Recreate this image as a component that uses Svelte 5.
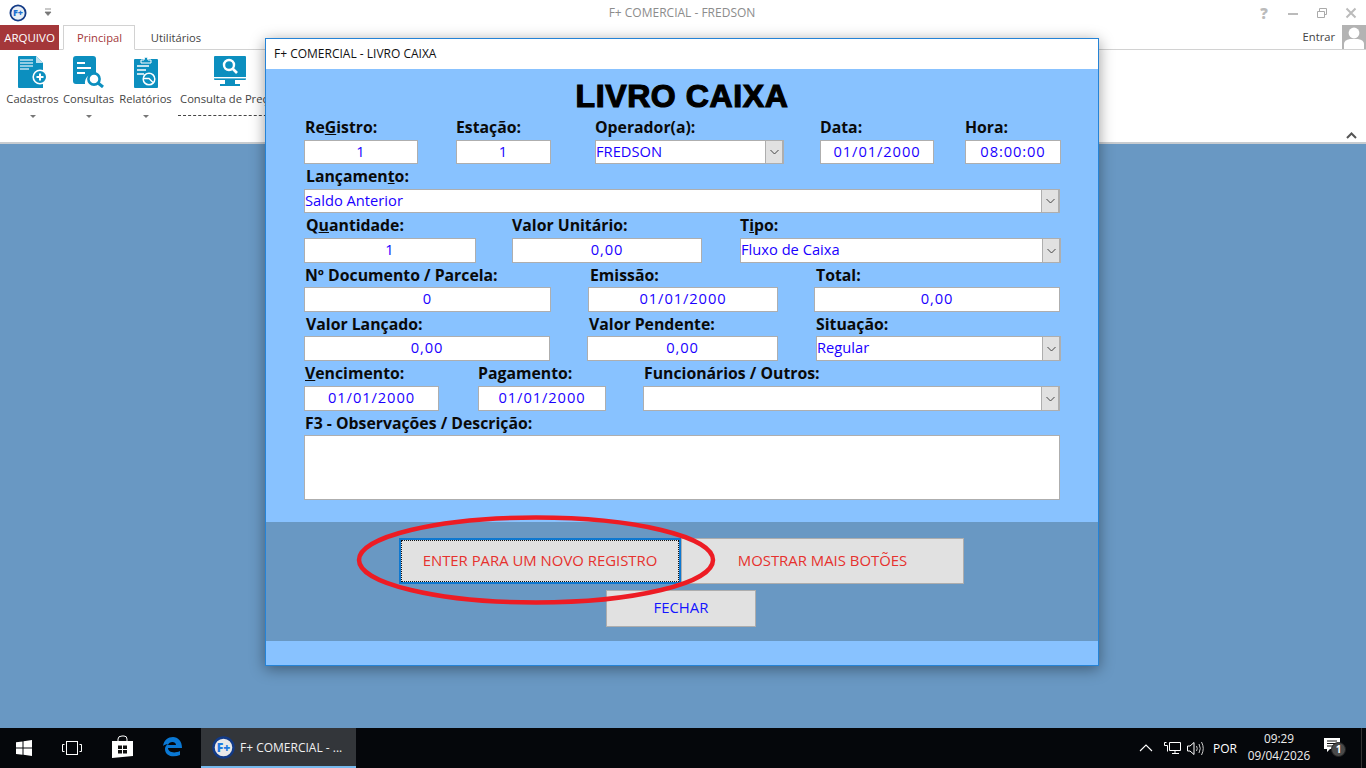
<script>
  // x / w are page coordinates of the field, lx the label's own start
  // lh is the space the label takes above its field
  const rows = [
    { h: 24, lh: 25, fields: [
      { label: ['Re', 'G', 'istro:'], lx: 305, x: 304, w: 114, value: '1' },
      { label: ['Estação:'], lx: 456, x: 456, w: 95, value: '1' },
      { label: ['Operador(a):'], lx: 595, x: 595, w: 189, value: 'FREDSON', combo: true },
      { label: ['Data:'], lx: 820, x: 820, w: 114, value: '01/01/2000' },
      { label: ['Hora:'], lx: 965, x: 965, w: 96, value: '08:00:00' }
    ] },
    { h: 24, lh: 25, fields: [
      { label: ['Lançamen', 't', 'o:'], lx: 306, x: 304, w: 756, value: 'Saldo Anterior', combo: true }
    ] },
    { h: 25, lh: 25, fields: [
      { label: ['Q', 'u', 'antidade:'], lx: 306, x: 304, w: 172, value: '1' },
      { label: ['Valor Unitário:'], lx: 512, x: 512, w: 190, value: '0,00' },
      { label: ['T', 'i', 'po:'], lx: 740, x: 740, w: 321, value: 'Fluxo de Caixa', combo: true }
    ] },
    { h: 25, lh: 24, fields: [
      { label: ['Nº Documento / Parcela:'], lx: 305, x: 304, w: 247, value: '0' },
      { label: ['Emissão:'], lx: 590, x: 588, w: 190, value: '01/01/2000' },
      { label: ['Total:'], lx: 816, x: 814, w: 246, value: '0,00' }
    ] },
    { h: 25, lh: 24, fields: [
      { label: ['Valor Lançado:'], lx: 306, x: 304, w: 246, value: '0,00' },
      { label: ['Valor Pendente:'], lx: 589, x: 587, w: 191, value: '0,00' },
      { label: ['Situação:'], lx: 816, x: 816, w: 245, value: 'Regular', combo: true }
    ] },
    { h: 25, lh: 25, fields: [
      { label: ['', 'V', 'encimento:'], lx: 305, x: 304, w: 135, value: '01/01/2000' },
      { label: ['Pagamento:'], lx: 478, x: 478, w: 128, value: '01/01/2000' },
      { label: ['Funcionários / Outros:'], lx: 644, x: 643, w: 417, value: '', combo: true }
    ] },
    { h: 65, lh: 24, fields: [
      { label: ['F3 - Observações / Descrição:'], lx: 305, x: 304, w: 756, value: '' }
    ] }
  ];

  const ml = (row, i) => {
    const prev = i === 0 ? 266 : row.fields[i - 1].x + row.fields[i - 1].w;
    return row.fields[i].x - prev;
  };
</script>

<div class="screen">
  <header class="titlebar">
    <svg class="logo" width="18" height="18" viewBox="0 0 18 18">
      <circle cx="9" cy="9" r="7.6" fill="#e8eef5" stroke="#123a86" stroke-width="1.8" />
      <text x="9" y="12.4" text-anchor="middle" class="logotext">F+</text>
    </svg>
    <svg class="qat" width="9" height="9" viewBox="0 0 9 9">
      <path d="M1 1h6M1 4h6L4 7.5z" fill="#777" stroke="#777" stroke-width="0.8" />
    </svg>
    <span class="apptitle">F+ COMERCIAL - FREDSON</span>
    <div class="winctl">
      <span class="help">?</span>
      <svg width="12" height="12" viewBox="0 0 12 12"><path d="M1 7h10" stroke="#bbb" stroke-width="2" /></svg>
      <svg width="12" height="12" viewBox="0 0 12 12"><path d="M1.500 4.500h7v6h-7zM3.500 4.500v-3h7v6h-2" fill="none" stroke="#aaa" /></svg>
      <svg width="12" height="12" viewBox="0 0 12 12"><path d="M1.500 1.500l9 9M10.500 1.500l-9 9" stroke="#bbb" stroke-width="2" /></svg>
    </div>
  </header>

  <nav class="tabs">
    <span class="arquivo">ARQUIVO</span>
    <span class="tab active">Principal</span>
    <span class="tab">Utilitários</span>
    <span class="entrar">Entrar</span>
    <span class="avatar">
      <svg width="24" height="24" viewBox="0 0 24 24">
        <circle cx="12" cy="8" r="5.400" fill="#fff" />
        <path d="M2 24v-5q0-4 6-5h8q6 1 6 5v5z" fill="#fff" />
      </svg>
    </span>
  </nav>

  <section class="ribbon">
    <div class="rbtn cadastros">
      <svg width="30" height="32" viewBox="0 0 30 32">
        <path d="M0 1a1 1 0 0 1 1-1h17l7 7v25H1a1 1 0 0 1-1-1z" fill="#0c8fbf" />
        <path d="M18 0l7 7h-7z" fill="#bfe1ef" />
        <path d="M2 4h13M2 7h13M2 10h13M2 13h9" stroke="#bfe1ef" stroke-width="1.400" />
        <circle cx="22" cy="21" r="6.800" fill="#0c8fbf" stroke="#fff" stroke-width="1.600" />
        <path d="M18.500 21h7M22 17.500v7" stroke="#fff" stroke-width="2" />
      </svg>
      <span>Cadastros</span>
      <i class="caret"></i>
    </div>
    <div class="rbtn consultas">
      <svg width="32" height="32" viewBox="0 0 32 32">
        <path d="M3 0h17a3 3 0 0 1 3 3v15a9 9 0 0 0-11 10H3a3 3 0 0 1-3-3V3a3 3 0 0 1 3-3z" fill="#0c8fbf" />
        <path d="M4 7h8M4 12h14M4 17h8" stroke="#fff" stroke-width="2" />
        <circle cx="21" cy="23" r="5.600" fill="none" stroke="#0c8fbf" stroke-width="2.600" />
        <path d="M25 27l5 4" stroke="#0c8fbf" stroke-width="3" />
      </svg>
      <span>Consultas</span>
      <i class="caret"></i>
    </div>
    <div class="rbtn relatorios">
      <svg width="24" height="32" viewBox="0 0 24 32">
        <path d="M1 3h22a1 1 0 0 1 1 1v27a1 1 0 0 1-1 1H1a1 1 0 0 1-1-1V4a1 1 0 0 1 1-1z" fill="#0c8fbf" />
        <path d="M7 4h3q0-3 2-3t2 3h3v3H7z" fill="#0c8fbf" stroke="#fff" stroke-width="1" />
        <path d="M3 10h12M3 14h9M3 18h7" stroke="#fff" stroke-width="1.400" />
        <circle cx="15" cy="23" r="5.800" fill="#0c8fbf" stroke="#fff" stroke-width="1.500" />
        <path d="M9.500 22.500h5.500l4 4" fill="none" stroke="#fff" stroke-width="1.300" />
      </svg>
      <span>Relatórios</span>
      <i class="caret"></i>
    </div>
    <div class="rbtn preco">
      <svg width="32" height="32" viewBox="0 0 32 32">
        <rect x="0" y="0" width="32" height="24" rx="1" fill="#0c8fbf" />
        <rect x="0" y="21" width="32" height="1.400" fill="#fff" />
        <path d="M11 24h10v4h5v2H6v-2h5z" fill="#0c8fbf" />
        <circle cx="15" cy="9" r="5" fill="none" stroke="#fff" stroke-width="2.400" />
        <path d="M19 13l4 4" stroke="#fff" stroke-width="2.600" />
      </svg>
      <span>Consulta de Preços</span>
      <i class="dashes"></i>
    </div>
    <svg class="collapse" width="11" height="7" viewBox="0 0 11 7">
      <path d="M1 6l4.500-4.500L10 6" fill="none" stroke="#555" stroke-width="2" />
    </svg>
  </section>

  <main class="desktop"></main>

  <footer class="taskbar">
    <svg class="t-win" width="16" height="16" viewBox="0 0 16 16">
      <path d="M0 2.300l6.500-.9v6.200H0zM7.500 1.300L16 0v7.600H7.500zM0 8.600h6.500v6.200L0 13.900zM7.500 8.600H16V16l-8.500-1.200z" fill="#fff" />
    </svg>
    <svg class="t-view" width="20" height="14" viewBox="0 0 20 14">
      <rect x="4.500" y="0.500" width="11" height="13" fill="none" stroke="#fff" />
      <path d="M2.500 3.500H.5v7h2M17.500 3.500h2v7h-2" fill="none" stroke="#fff" />
    </svg>
    <svg class="t-store" width="21" height="23" viewBox="0 0 21 23">
      <path d="M0 6h21v15l-21 2z" fill="#fff" />
      <path d="M6 7V4q0-3 4-3h2q3 0 3 3v3" fill="none" stroke="#fff" />
      <path d="M6 10.500h4v3.500H6zM11 10.500h4v3.500h-4zM6 15h4v3.500H6zM11 15h4v3.500h-4z" fill="#111" />
    </svg>
    <svg class="t-edge" width="20" height="20" viewBox="0 0 20 20">
      <path d="M1 9C2 3 6 0 11 0c5 0 9 4 9 11H6c0 4 6 6 12 3v4c-7 3-15 1-15-6 0-2 1-4 3-5-2 0-4 1-5 2zM6 8h8c0-4-7-4-8 0z" fill="#0a78d4" />
    </svg>
    <div class="t-app">
      <svg width="23" height="23" viewBox="0 0 23 23">
        <circle cx="11.500" cy="11.500" r="10" fill="#e8e8e8" stroke="#123a86" stroke-width="2.400" />
        <text x="11.500" y="16" text-anchor="middle" class="applogo">F+</text>
      </svg>
      <span>F+ COMERCIAL - ...</span>
    </div>
    <div class="tray">
      <svg width="14" height="8" viewBox="0 0 14 8"><path d="M1 7l6-6 6 6" fill="none" stroke="#fff" stroke-width="1.100" /></svg>
      <svg class="net" width="17" height="15" viewBox="0 0 17 15">
        <path d="M.5 1.500h2M.5 1.500v3M5.500 1.500h11v8H5.500zM8 12.500h7M11 9.500v3M.5 4.500h3v6" fill="none" stroke="#fff" />
      </svg>
      <svg class="vol" width="18" height="15" viewBox="0 0 18 15">
        <path d="M.5 5h2.500l4-3.500v12L3 10H.5z" fill="none" stroke="#fff" />
        <path d="M9.500 5q1.500 2.500 0 5M12 3q2.500 4.500 0 9M14.500 1q3.500 6.500 0 13" fill="none" stroke="#ccc" />
      </svg>
      <span class="lang">POR</span>
      <div class="clock"><span>09:29</span><span>09/04/2026</span></div>
      <div class="notif">
        <svg width="16" height="14" viewBox="0 0 16 14">
          <path d="M0 0h16v11H6l-3 3v-3H0z" fill="#fff" />
          <path d="M3 3h10M3 5.500h10M3 8h10" stroke="#111" />
        </svg>
        <b class="badge">1</b>
      </div>
    </div>
  </footer>

  <div class="window">
    <div class="wtitle">F+ COMERCIAL - LIVRO CAIXA</div>
    <div class="wbody">
      <h1>LIVRO CAIXA</h1>
      {#each rows as row}
        <div class="row">
          {#each row.fields as f, i}
            <div class="col" style="margin-left:{ml(row, i)}px;width:{f.w}px">
              <label style="padding-left:{f.lx - f.x}px;height:{row.lh}px">{f.label[0]}{#if f.label[1]}<u>{f.label[1]}</u>{f.label[2]}{/if}</label>
              <div class="field" class:combo={f.combo} style="height:{row.h}px">
                <span>{f.value}</span>
                {#if f.combo}
                  <i class="arrow">
                    <svg width="9" height="6" viewBox="0 0 9 6"><path d="M.5 1l4 4 4-4" fill="none" stroke="#444" /></svg>
                  </i>
                {/if}
              </div>
            </div>
          {/each}
        </div>
      {/each}
    </div>
    <div class="band">
      <div class="btnrow">
        <button class="red focus"><span>ENTER PARA UM NOVO REGISTRO</span></button>
        <button class="red more">MOSTRAR MAIS BOTÕES</button>
      </div>
      <button class="fechar">FECHAR</button>
    </div>
    <div class="wfoot"></div>
  </div>

  <svg class="circle" width="370" height="100" viewBox="0 0 370 100">
    <ellipse cx="185" cy="50" rx="177" ry="42.500" fill="none" stroke="#ed1c24" stroke-width="4.500" />
  </svg>
</div>

<style>
  :global(body) { margin: 0; overflow: hidden; }

  .screen {
    position: relative;
    width: 1366px;
    height: 768px;
    display: flex;
    flex-direction: column;
    overflow: hidden;
    background: #fff;
    font-family: "Open Sans", "Noto Sans", sans-serif;
  }

  .titlebar {
    position: relative;
    height: 25px;
    display: flex;
    align-items: center;
    flex: none;
  }
  .logo { margin-left: 9px; }
  .logotext { font: 800 9px "Open Sans", sans-serif; fill: #1f6fd0; }
  .qat { margin-left: 17px; }
  .apptitle {
    position: absolute;
    left: 0;
    right: 2px;
    text-align: center;
    font-size: 12px;
    color: #8c8c8c;
  }
  .winctl {
    margin-left: auto;
    display: flex;
    align-items: center;
    gap: 17px;
    padding-right: 9px;
  }
  .help { font-size: 15px; font-weight: 800; color: #bbb; width: 12px; text-align: center; }

  .tabs {
    height: 25px;
    display: flex;
    align-items: stretch;
    flex: none;
    box-sizing: border-box;
    border-bottom: 1px solid #d2d2d2;
    font-size: 11.200px;
  }
  .arquivo {
    width: 59px;
    height: 25px;
    background: #a4373a;
    color: #fff;
    text-align: center;
    line-height: 25px;
    font-size: 11.500px;
  }
  .tab {
    width: 72px;
    text-align: center;
    line-height: 25px;
    color: #444;
    margin-left: 4px;
    padding: 0 0 0 1px;
  }
  .tab.active {
    height: 25px;
    box-sizing: border-box;
    border: 1px solid #d2d2d2;
    border-bottom: 1px solid #fff;
    line-height: 24px;
    color: #a4373a;
    background: #fff;
  }
  .tab + .tab { margin-left: 4px; }
  .entrar { margin-left: auto; line-height: 24px; color: #444; padding-right: 7px; }
  .avatar { width: 24px; height: 24px; background: #b3b3b3; overflow: hidden; }
  .avatar svg { display: block; }

  .ribbon {
    position: relative;
    height: 94px;
    flex: none;
    box-sizing: border-box;
    border-bottom: 2px solid #c8ccd0;
    display: flex;
    font-size: 11.200px;
    color: #444;
  }
  .rbtn {
    display: flex;
    flex-direction: column;
    align-items: center;
    padding-top: 6px;
    white-space: nowrap;
  }
  .rbtn svg { display: block; }
  .rbtn span { margin-top: 3px; line-height: 16px; }
  .caret {
    width: 0;
    height: 0;
    margin-top: 8px;
    border: 3px solid transparent;
    border-top: 3px solid #777;
    border-bottom: 0;
  }
  .cadastros { margin-left: 6px; width: 53px; }
  .consultas { margin-left: 3px; width: 53px; }
  .relatorios { margin-left: 4px; width: 53px; }
  .preco { margin-left: 6px; width: 104px; }
  .dashes { width: 100%; margin-top: 8px; border-top: 1px dashed #444; }
  .collapse { position: absolute; right: 9px; bottom: 3px; }

  .desktop { flex: 1; background: #6998c3; }

  .taskbar {
    height: 40px;
    flex: none;
    background: #05070b;
    display: flex;
    align-items: center;
    color: #fff;
  }
  .t-win { margin-left: 16px; }
  .t-view { margin-left: 30px; }
  .t-store { margin-left: 30px; margin-top: -3px; }
  .t-edge { margin-left: 29px; margin-top: -2px; }
  .t-app {
    margin-left: 19px;
    width: 155px;
    height: 40px;
    box-sizing: border-box;
    background: #33363a;
    border-bottom: 2px solid #76b9ed;
    display: flex;
    align-items: center;
    padding-left: 11px;
    gap: 5px;
    font-size: 12px;
    color: #f0f0f0;
  }
  .applogo { font: 800 12px "Open Sans", sans-serif; fill: #1f7ae0; }
  .tray {
    margin-left: auto;
    display: flex;
    align-items: center;
    height: 40px;
    padding-right: 5px;
    border-right: 1px solid #333;
    margin-right: 4px;
  }
  .net { margin-left: 11px; }
  .vol { margin-left: 6px; }
  .lang { margin-left: 8px; font-size: 12px; width: 30px; }
  .clock {
    width: 72px;
    display: flex;
    flex-direction: column;
    align-items: center;
    font-size: 11.800px;
    line-height: 17px;
    margin-top: -2px;
    color: #eee;
  }
  .notif { position: relative; margin-left: 9px; margin-right: 16px; height: 20px; margin-top: -6px; }
  .badge {
    position: absolute;
    left: 7px;
    top: 7px;
    width: 15px;
    height: 15px;
    border-radius: 50%;
    background: #4a4a4a;
    border: 1px solid #222;
    box-sizing: border-box;
    font-size: 10px;
    line-height: 13px;
    text-align: center;
  }

  .window {
    position: absolute;
    left: 265px;
    top: 38px;
    width: 834px;
    height: 628px;
    box-sizing: border-box;
    border: 1px solid #2583d6;
    display: flex;
    flex-direction: column;
    box-shadow: 0 3px 14px rgba(0, 0, 0, 0.4);
    background: #88c2ff;
  }
  .wtitle {
    height: 30px;
    flex: none;
    background: #fff;
    font-size: 12px;
    line-height: 30px;
    padding-left: 8px;
    color: #111;
  }
  .wbody { height: 453px; flex: none; }
  h1 {
    margin: 0;
    height: 46px;
    box-sizing: border-box;
    padding-top: 9px;
    text-align: center;
    font: 900 32px/36px "Liberation Sans", sans-serif;
    letter-spacing: 0.6px;
    color: #000;
    -webkit-text-stroke: 1.200px #000;
  }
  .row { display: flex; }
  .col { flex: none; }
  label {
    display: block;
    box-sizing: border-box;
    line-height: 25px;
    font-size: 15.800px;
    font-weight: 700;
    color: #0a0a0a;
    white-space: nowrap;
  }
  .field {
    position: relative;
    box-sizing: border-box;
    background: #fff;
    border: 1px solid #aeaeae;
    text-align: center;
    font-size: 14.700px;
    letter-spacing: 0.9px;
    color: #1a00ff;
    line-height: 21px;
  }
  .field.combo { text-align: left; letter-spacing: 0; padding-left: 0; border-width: 1px 2px 1px 1px; }
  .arrow {
    position: absolute;
    top: 0;
    right: 0;
    bottom: 0;
    width: 16px;
    background: #e1e1e1;
    border-left: 1px solid #aeaeae;
    display: flex;
    align-items: center;
    justify-content: center;
  }

  .band {
    height: 119px;
    flex: none;
    box-sizing: border-box;
    background: #6998c3;
    padding-top: 16px;
  }
  .btnrow { display: flex; padding-left: 133px; }
  button {
    display: block;
    font: 400 14.900px/20px "Open Sans", sans-serif;
    background: #e1e1e1;
    border: 1px solid #adadad;
    padding: 0 0 3px;
  }
  .red { color: #e6322e; height: 46px; }
  .focus {
    width: 282px;
    border: 2px solid #0e78d0;
    padding: 0;
    height: 46px;
  }
  .focus span {
    width: 100%;
    height: 100%;
    box-sizing: border-box;
    border: 1px dotted #111;
    padding-bottom: 2px;
    display: flex;
    align-items: center;
    justify-content: center;
  }
  .more { width: 283px; }
  .fechar {
    margin: 6px 0 0 340px;
    width: 150px;
    height: 37px;
    color: #1414ff;
  }
  .wfoot { flex: 1; background: #88c2ff; }

  .circle { position: absolute; left: 351px; top: 510px; pointer-events: none; }
</style>
